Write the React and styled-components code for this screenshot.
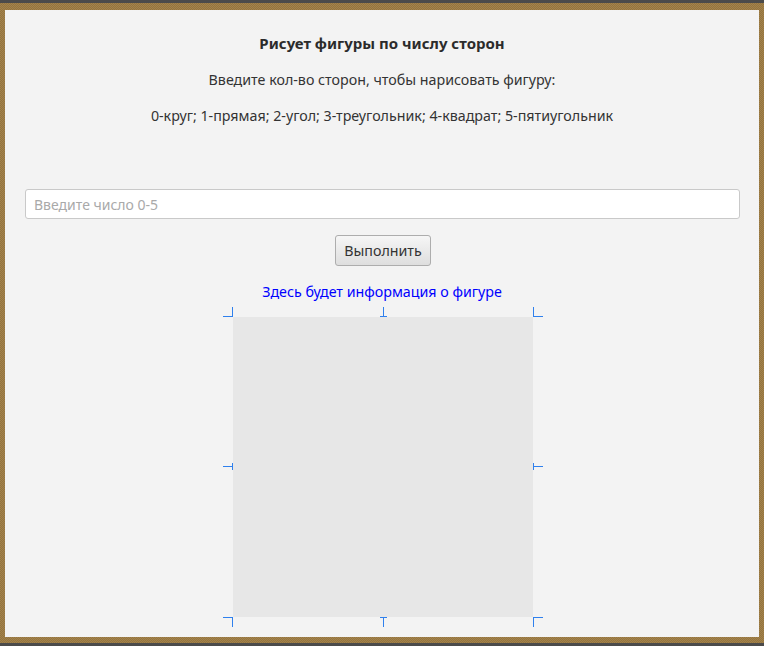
import styled, { createGlobalStyle } from "styled-components";

const GlobalStyle = createGlobalStyle`
    html, body {
        margin: 0;
        padding: 0;
        background: #4b4b4b;
    }
    body {
        font-family: "Noto Sans", "Open Sans", sans-serif;
    }
`;

const Frame = styled.div`
    margin-top: 3px;
    height: 640px;
    box-sizing: border-box;
    padding: 7px 5px 6px 5px;
    background-color: #9c7b45;
    background-image: repeating-conic-gradient(#a3834c 0 25%, #94743f 0 50%);
    background-size: 2px 2px;
`;

const Panel = styled.div`
    height: 100%;
    box-sizing: border-box;
    background: #f3f3f3;
    display: flex;
    flex-direction: column;
    align-items: center;
    padding-top: 23px;
    color: #333;
`;

const Title = styled.h1`
    margin: 0;
    font-size: 15px;
    line-height: 20px;
    font-weight: 700;
    color: #2b2b2b;
`;

const Line = styled.p`
    margin: ${(p) => p.$gap}px 0 0;
    font-size: 14.25px;
    line-height: 20px;
    color: ${(p) => p.$color || "#333"};
`;

const Input = styled.input`
    align-self: stretch;
    margin: 63px 19px 0 20px;
    height: 30px;
    box-sizing: border-box;
    border: 1px solid #c9c9c9;
    border-radius: 3px;
    background: #fff;
    padding: 0 8px;
    font-family: inherit;
    font-size: 14px;
    color: #333;
    outline: none;
    &::placeholder {
        color: #a9a9a9;
    }
`;

const Button = styled.button`
    margin-top: 16px;
    margin-left: 2px;
    width: 96px;
    height: 31px;
    border: 1px solid #adadad;
    border-radius: 3px;
    background: linear-gradient(#f6f6f6, #dedede);
    font-family: inherit;
    font-size: 14.25px;
    color: #333;
    padding: 0;
    cursor: pointer;
`;

const CanvasWrap = styled.div`
    position: relative;
    margin-top: 15px;
    margin-left: 2px;
    width: 300px;
    height: 300px;
    background: #e7e7e7;
`;

const Marks = styled.svg`
    position: absolute;
    left: -10px;
    top: -10px;
    overflow: visible;
`;

function Handles() {
    const c = "#2f80ed";
    return (
        <Marks width="320" height="320" viewBox="0 0 320 320">
            <g stroke={c} strokeWidth="1" fill="none" shapeRendering="crispEdges">
                <path d="M0 9.5H9.5V0" />
                <path d="M310.5 0V9.5H320" />
                <path d="M160.5 0V9.5M157 9.5H164" />
                <path d="M0 159.5H9.5M9.5 156V163" />
                <path d="M310.5 156V163M310.5 159.5H320" />
                <path d="M0 310.5H9.5V320" />
                <path d="M160.5 310.5V320M157 310.5H164" />
                <path d="M320 310.5H310.5V320" />
            </g>
        </Marks>
    );
}

export default function App() {
    return (
        <>
            <GlobalStyle />
            <Frame>
                <Panel>
                    <Title>Рисует фигуры по числу сторон</Title>
                    <Line $gap={17}>Введите кол-во сторон, чтобы нарисовать фигуру:</Line>
                    <Line $gap={16}>0-круг; 1-прямая; 2-угол; 3-треугольник; 4-квадрат; 5-пятиугольник</Line>
                    <Input placeholder="Введите число 0-5" />
                    <Button>Выполнить</Button>
                    <Line $gap={16} $color="#0000ff">Здесь будет информация о фигуре</Line>
                    <CanvasWrap>
                        <Handles />
                    </CanvasWrap>
                </Panel>
            </Frame>
        </>
    );
}
